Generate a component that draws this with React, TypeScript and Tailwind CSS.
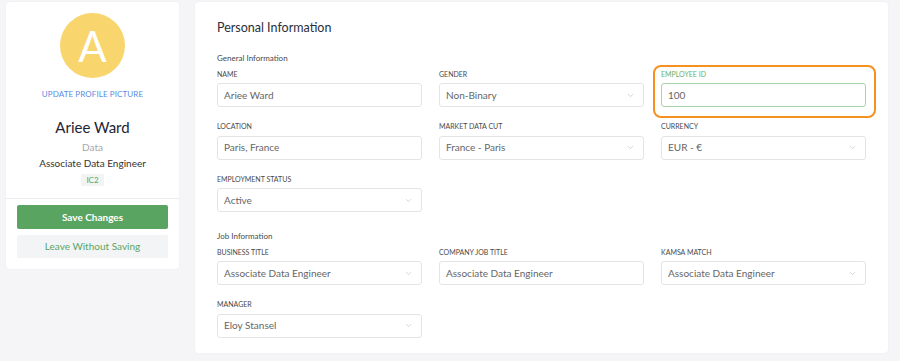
import { ChevronDown } from "lucide-react";

type Field = {
  label: string;
  value: string;
  select?: boolean;
  highlight?: boolean;
};

function FieldBox({ field }: { field: Field }) {
  return (
    <div className="relative flex flex-col">
      {field.highlight && (
        <div className="absolute -left-[8px] -right-[10px] -top-[5px] -bottom-[11px] rounded-[8px] border-2 border-[#f5911f]" />
      )}
      <label
        className={`h-[9px] text-[7px] leading-[9px] uppercase ${
          field.highlight ? "text-[#6aae6c]" : "text-[#4a4a4a]"
        }`}
      >
        {field.label}
      </label>
      <div
        className={`mt-[4.5px] h-[24px] flex items-center justify-between rounded-[3px] border bg-white pl-[6px] pr-[8px] text-[10px] text-[#666] ${
          field.highlight ? "border-[#a9d3a9]" : "border-[#e3e4e8]"
        }`}
      >
        <span>{field.value}</span>
        {field.select && <ChevronDown className="w-[9px] h-[9px] text-[#a8a8a8]" strokeWidth={1.25} />}
      </div>
    </div>
  );
}

export default function App() {
  const general: Field[] = [
    { label: "Name", value: "Ariee Ward" },
    { label: "Gender", value: "Non-Binary", select: true },
    { label: "Employee ID", value: "100", highlight: true },
    { label: "Location", value: "Paris, France" },
    { label: "Market Data Cut", value: "France - Paris", select: true },
    { label: "Currency", value: "EUR - €", select: true },
    { label: "Employment Status", value: "Active", select: true },
  ];

  const job: Field[] = [
    { label: "Business Title", value: "Associate Data Engineer", select: true },
    { label: "Company Job Title", value: "Associate Data Engineer" },
    { label: "Kamsa Match", value: "Associate Data Engineer", select: true },
    { label: "Manager", value: "Eloy Stansel", select: true },
  ];

  return (
    <div
      className="w-[900px] h-[361px] bg-[#f5f5f7] flex items-start gap-[16px] pl-[6px] pt-[2px] overflow-hidden"
      style={{ fontFamily: "Lato, 'Open Sans', sans-serif" }}
    >
      {/* Profile card */}
      <div className="w-[173px] h-[267px] shrink-0 rounded-[4px] bg-white shadow-[0_0_2px_rgba(0,0,0,0.06)] flex flex-col items-center pt-[11px]">
        <div className="w-[65px] h-[65px] rounded-full bg-[#f8d66d] flex items-center justify-center text-white text-[42px] leading-none">
          A
        </div>
        <div className="mt-[11px] text-[8px] leading-[10px] tracking-[0.1px] text-[#5a8ce0] uppercase">
          Update Profile Picture
        </div>
        <div className="mt-[19px] text-[15px] leading-[18px] text-[#1e2433]">Ariee Ward</div>
        <div className="mt-[5px] text-[10px] leading-[12px] text-[#a8a8a8]">Data</div>
        <div className="mt-[4px] text-[10px] leading-[12px] text-[#333]">Associate Data Engineer</div>
        <div className="mt-[5px] h-[12px] px-[5px] rounded-[2px] bg-[#f1f4f2] text-[8px] leading-[12px] text-[#5aa562]">
          IC2
        </div>
        <div className="mt-[12px] w-full border-t border-[#ececee]" />
        <div className="w-full px-[11px] mt-[6px] flex flex-col gap-[6px]">
          <button className="h-[24px] w-full rounded-[2px] bg-[#59a461] text-white text-[10px] font-bold">
            Save Changes
          </button>
          <button className="h-[23px] w-full rounded-[2px] bg-[#f3f4f6] text-[#5aa562] text-[10px]">
            Leave Without Saving
          </button>
        </div>
      </div>

      {/* Personal information */}
      <div className="w-[693px] h-[351px] shrink-0 rounded-[4px] bg-white shadow-[0_0_2px_rgba(0,0,0,0.06)] px-[22px] pt-[18px]">
        <h1 className="text-[12.5px] leading-[16px] text-[#2a2f3a]">Personal Information</h1>

        <div className="mt-[17px] text-[8px] leading-[10px] text-[#4a4a4a]">General Information</div>
        <div className="mt-[6.5px] grid grid-cols-3 gap-x-[17px] gap-y-[15px] w-[649px]">
          {general.map((f) => (
            <FieldBox key={f.label} field={f} />
          ))}
        </div>

        <div className="mt-[19px] text-[8px] leading-[10px] text-[#4a4a4a]">Job Information</div>
        <div className="mt-[6.5px] grid grid-cols-3 gap-x-[17px] gap-y-[15px] w-[649px]">
          {job.map((f) => (
            <FieldBox key={f.label} field={f} />
          ))}
        </div>
      </div>
    </div>
  );
}
